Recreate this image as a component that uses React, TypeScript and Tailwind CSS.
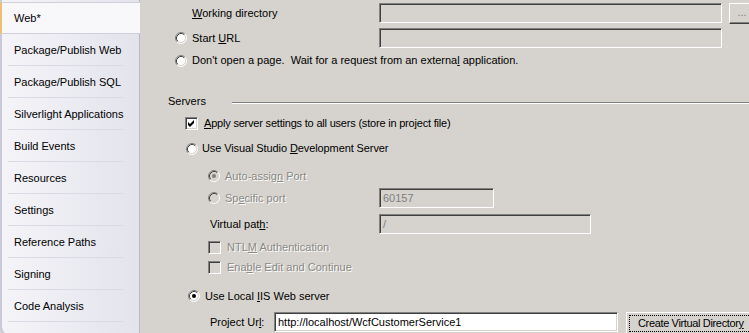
import React from "react";

const U = ({ c }: { c: string }) => (
  <span className="underline decoration-1 underline-offset-[1px]">{c}</span>
);

const Radio = ({ checked = false, disabled = false }: { checked?: boolean; disabled?: boolean }) => (
  <svg width="12" height="12" viewBox="0 0 12 12" className="shrink-0">
    <circle cx="6" cy="6" r="5" fill={disabled ? "#d6d3ce" : "#ffffff"} />
    <path d="M2.11 9.89 A5.5 5.5 0 0 1 9.89 2.11" stroke="#808080" fill="none" />
    <path d="M2.82 9.18 A4.5 4.5 0 0 1 9.18 2.82" stroke="#404040" fill="none" />
    <path d="M9.89 2.11 A5.5 5.5 0 0 1 2.11 9.89" stroke="#ffffff" fill="none" />
    <path d="M9.18 2.82 A4.5 4.5 0 0 1 2.82 9.18" stroke="#d6d3ce" fill="none" />
    {checked && <circle cx="6" cy="6" r="2" fill={disabled ? "#808080" : "#000000"} />}
  </svg>
);

const Check = ({ checked = false, disabled = false }: { checked?: boolean; disabled?: boolean }) => (
  <div
    className={`w-[13px] h-[13px] shrink-0 border border-t-[#808080] border-l-[#808080] border-b-white border-r-white shadow-[inset_1px_1px_0_#404040,inset_-1px_-1px_0_#d6d3ce] ${
      disabled ? "bg-[#d6d3ce]" : "bg-white"
    }`}
  >
    {checked && (
      <svg width="11" height="11" viewBox="0 0 11 11">
        <polygon points="2,4 4,6 8,2 8,5 4,9 2,7" fill={disabled ? "#808080" : "#000"} />
      </svg>
    )}
  </div>
);

const Field = ({ w, text, white = false, dim = false }: { w: string; text?: string; white?: boolean; dim?: boolean }) => (
  <div
    className={`${w} h-[20px] shrink-0 flex items-center pl-[3px] whitespace-nowrap border border-t-[#808080] border-l-[#808080] border-b-white border-r-white shadow-[inset_1px_1px_0_#404040,inset_-1px_-1px_0_#d6d3ce] ${
      white ? "bg-white" : "bg-[#d6d3ce]"
    } ${dim ? "text-[#808080]" : "text-black"}`}
  >
    {text}
  </div>
);

const dis = "text-[#8a8884] [text-shadow:1px_1px_0_#ffffff]";

const items = [
  "Web*",
  "Package/Publish Web",
  "Package/Publish SQL",
  "Silverlight Applications",
  "Build Events",
  "Resources",
  "Settings",
  "Reference Paths",
  "Signing",
  "Code Analysis",
];

export default function App() {
  return (
    <div className="w-[749px] h-[333px] overflow-hidden flex bg-[#d6d3ce] [font-family:'Liberation_Sans',Arial,sans-serif] text-[11px] text-black leading-none whitespace-nowrap">
      {/* Sidebar */}
      <div className="w-[140px] h-[338px] shrink-0 flex flex-col pt-[2px] bg-gradient-to-r from-[#f4f4f8] to-[#e3e3ec] border-l-2 border-l-[#c9c9da] border-r border-r-[#b8b8c4] border-b-2 border-b-[#a8a8b8] rounded-bl-[12px]">
        {items.map((t, i) =>
          i === 0 ? (
            <div
              key={t}
              className="h-[32px] flex items-center pl-[12px] bg-[#f8f7fa] border-y border-[#d0d0dc] -ml-[2px] mr-[-1px] border-l-2 border-l-[#f0c070]"
            >
              {t}
            </div>
          ) : (
            <div key={t} className="h-[32px] flex flex-col">
              <div className="flex-1 flex items-center pl-[12px] pt-[1px]">{t}</div>
              <div className="h-px mx-[6px] mr-[16px] bg-[#dadae4]" />
            </div>
          )
        )}
      </div>

      {/* Main */}
      <div className="flex-1 flex flex-col min-w-0">
        {/* Working directory */}
        <div className="mt-[3px] h-[20px] flex items-center">
          <div className="w-[239px] shrink-0 pl-[52px]">
            <U c="W" />orking directory
          </div>
          <Field w="w-[343px]" />
          <div className="ml-[7px] w-[26px] h-[21px] shrink-0 flex items-end justify-center pb-[5px] text-[#808080] border border-t-white border-l-white border-b-[#404040] border-r-[#404040] shadow-[inset_-1px_-1px_0_#808080]">
            ...
          </div>
        </div>
        {/* Start URL */}
        <div className="mt-[5px] h-[20px] flex items-center">
          <div className="w-[239px] shrink-0 pl-[35px] flex items-center gap-[5px]">
            <Radio />
            <span>
              Start <U c="U" />RL
            </span>
          </div>
          <Field w="w-[343px]" />
        </div>
        {/* Don't open */}
        <div className="mt-[3px] h-[20px] flex items-center pl-[35px] gap-[5px]">
          <Radio />
          <span className="whitespace-pre">
            Don't open a page.  Wait for a request from an externa<U c="l" /> application.
          </span>
        </div>
        {/* Servers */}
        <div className="mt-[21px] h-[20px] flex items-center">
          <div className="w-[92px] shrink-0 pl-[28px]">Servers</div>
          <div className="flex-1 h-[2px] mt-[3px] border-t border-t-[#808080] border-b border-b-white" />
        </div>
        {/* Apply */}
        <div className="mt-[2px] h-[20px] flex items-center pl-[45px] gap-[6px]">
          <Check checked />
          <span className="tracking-[-0.2px]">
            <U c="A" />pply server settings to all users (store in project file)
          </span>
        </div>
        {/* VS dev server */}
        <div className="mt-[5px] h-[20px] flex items-center pl-[46px] gap-[4px]">
          <Radio />
          <span className="tracking-[-0.1px]">
            Use Visual Studio <U c="D" />evelopment Server
          </span>
        </div>
        {/* Auto-assign */}
        <div className="mt-[8px] h-[20px] flex items-center pl-[68px] gap-[5px]">
          <Radio checked disabled />
          <span className={dis}>
            Auto-assig<U c="n" /> Port
          </span>
        </div>
        {/* Specific port */}
        <div className="mt-[2px] h-[20px] flex items-center">
          <div className="w-[239px] shrink-0 pl-[68px] flex items-center gap-[5px]">
            <Radio disabled />
            <span className={dis}>
              Sp<U c="e" />cific port
            </span>
          </div>
          <Field w="w-[115px]" text="60157" dim />
        </div>
        {/* Virtual path */}
        <div className="mt-[6px] h-[20px] flex items-center">
          <div className="w-[239px] shrink-0 pl-[70px]">
            Virtual pat<U c="h" />:
          </div>
          <Field w="w-[212px]" text="/" dim />
        </div>
        {/* NTLM */}
        <div className="mt-[3px] h-[20px] flex items-center pl-[68px] gap-[6px]">
          <Check disabled />
          <span className={dis}>
            NTL<U c="M" /> Authentication
          </span>
        </div>
        {/* Enable Edit */}
        <div className="h-[20px] flex items-center pl-[68px] gap-[6px]">
          <Check disabled />
          <span className={dis}>
            Ena<U c="b" />le Edit and Continue
          </span>
        </div>
        {/* Local IIS */}
        <div className="mt-[9px] h-[20px] flex items-center pl-[48px] gap-[5px]">
          <Radio checked />
          <span>
            Use Local <U c="I" />IS Web server
          </span>
        </div>
        {/* Project Url */}
        <div className="mt-[6px] h-[21px] flex items-start">
          <div className="w-[134px] shrink-0 pl-[70px] h-[20px] flex items-center">
            Project Ur<U c="l" />:
          </div>
          <Field w="w-[344px]" text="http://localhost/WcfCustomerService1" white />
          <div className="ml-[8px] w-[130px] h-[23px] shrink-0 border border-t-white border-l-white border-b-[#404040] border-r-[#404040] shadow-[inset_-1px_-1px_0_#808080] p-[2px]">
            <div className="w-full h-full border border-dotted border-black flex items-center pl-[8px] whitespace-nowrap">
              <span className="tracking-[-0.35px]">
                Create Virtual Director<U c="y" />
              </span>
            </div>
          </div>
        </div>
      </div>
    </div>
  );
}
